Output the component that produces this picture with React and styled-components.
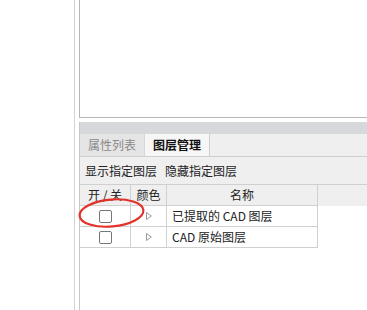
import React from "react";
import styled, { createGlobalStyle } from "styled-components";

const Global = createGlobalStyle`
  html, body { margin: 0; padding: 0; background: #fff; }
  body {
    font-family: "Noto Sans CJK SC", "Noto Sans", sans-serif;
    font-size: 12px;
    color: #222;
  }
  * { box-sizing: border-box; }
`;

const Page = styled.div`
  display: flex;
  height: 310px;
  padding-left: 74px;
  overflow: hidden;
`;

const Frame = styled.div`
  flex: 1;
  display: flex;
  flex-direction: column;
  border-left: 1px solid #d2d2d2;
  padding-left: 4px;
`;

const TopPanel = styled.div`
  height: 118px;
  flex: none;
  border-left: 1px solid #b6b6b6;
  border-bottom: 1px solid #b6b6b6;
  background: #fff;
`;

const BottomPanel = styled.div`
  margin-top: 4px;
  flex: 1;
  display: flex;
  flex-direction: column;
  border-left: 1px solid #c8c8c8;
`;

const TitleBand = styled.div`
  height: 12px;
  flex: none;
  background: #d6d8dc;
`;

const TabBar = styled.div`
  height: 23px;
  flex: none;
  display: flex;
  background: #efefef;
  border-bottom: 1px solid #cfcfcf;
`;

const Tab = styled.div`
  flex: none;
  display: flex;
  align-items: center;
  justify-content: center;
  white-space: nowrap;
  width: ${(p) => (p.$active ? "66px" : "64px")};
  background: ${(p) => (p.$active ? "#f6f6f6" : "#e5e5e5")};
  color: ${(p) => (p.$active ? "#111" : "#8a8a8a")};
  font-weight: ${(p) => (p.$active ? 700 : 400)};
  border-left: ${(p) => (p.$active ? "1px solid #d6d6d6" : "none")};
  border-right: ${(p) => (p.$active ? "1px solid #cfcfcf" : "none")};
  line-height: 1;
`;

const Toolbar = styled.div`
  height: 28px;
  flex: none;
  display: flex;
  align-items: center;
  gap: 8px;
  padding-left: 5px;
  background: #efefef;
  border-bottom: 1px solid #cfcfcf;
  color: #222;
`;

const ToolButton = styled.span`
  line-height: 1;
  white-space: nowrap;
`;

const TableWrap = styled.div`
  position: relative;
`;

const Grid = styled.div`
  display: grid;
  grid-template-columns: 51px 36px 151px 1fr;
`;

const Cell = styled.div`
  height: 21px;
  display: flex;
  align-items: center;
  justify-content: ${(p) => (p.$left ? "flex-start" : "center")};
  padding-left: ${(p) => (p.$left ? "5px" : "0")};
  background: ${(p) => (p.$head ? "#efefef" : "#fff")};
  border-right: ${(p) => (p.$blank ? "none" : "1px solid #d0d0d0")};
  border-bottom: ${(p) => (p.$blank ? "none" : "1px solid #d0d0d0")};
  color: #222;
  white-space: pre;
  line-height: 1;
`;

const Check = styled.input.attrs({ type: "checkbox" })`
  appearance: none;
  -webkit-appearance: none;
  margin: 0;
  width: 13px;
  height: 13px;
  border: 1px solid #767676;
  border-radius: 2px;
  background: #fff;
`;

const Marker = styled.svg`
  position: absolute;
  left: -4px;
  top: 10px;
  pointer-events: none;
  overflow: visible;
`;

const Arrow = () => (
  <svg width="6" height="8" viewBox="0 0 6 8">
    <polygon points="0.5,0.5 5.3,4 0.5,7.5" fill="none" stroke="#9a9a9a" strokeWidth="1" />
  </svg>
);

const layers = ["已提取的 CAD 图层", "CAD 原始图层"];

export default function App() {
  return (
    <>
      <Global />
      <Page>
        <Frame>
          <TopPanel />
          <BottomPanel>
            <TitleBand />
            <TabBar>
              <Tab>属性列表</Tab>
              <Tab $active>图层管理</Tab>
            </TabBar>
            <Toolbar>
              <ToolButton>显示指定图层</ToolButton>
              <ToolButton>隐藏指定图层</ToolButton>
            </Toolbar>
            <TableWrap>
              <Grid>
                <Cell $head>开 / 关</Cell>
                <Cell $head>颜色</Cell>
                <Cell $head>名称</Cell>
                <Cell $head $blank />
                {layers.map((name) => (
                  <React.Fragment key={name}>
                    <Cell>
                      <Check />
                    </Cell>
                    <Cell>
                      <Arrow />
                    </Cell>
                    <Cell $left>{name}</Cell>
                    <Cell $blank />
                  </React.Fragment>
                ))}
              </Grid>
              <Marker width="70" height="36" viewBox="0 0 70 36">
                <ellipse
                  cx="35.5"
                  cy="18"
                  rx="32"
                  ry="13.5"
                  fill="none"
                  stroke="#e2322b"
                  strokeWidth="2.2"
                  transform="rotate(-5 35.5 18)"
                />
              </Marker>
            </TableWrap>
          </BottomPanel>
        </Frame>
      </Page>
    </>
  );
}
